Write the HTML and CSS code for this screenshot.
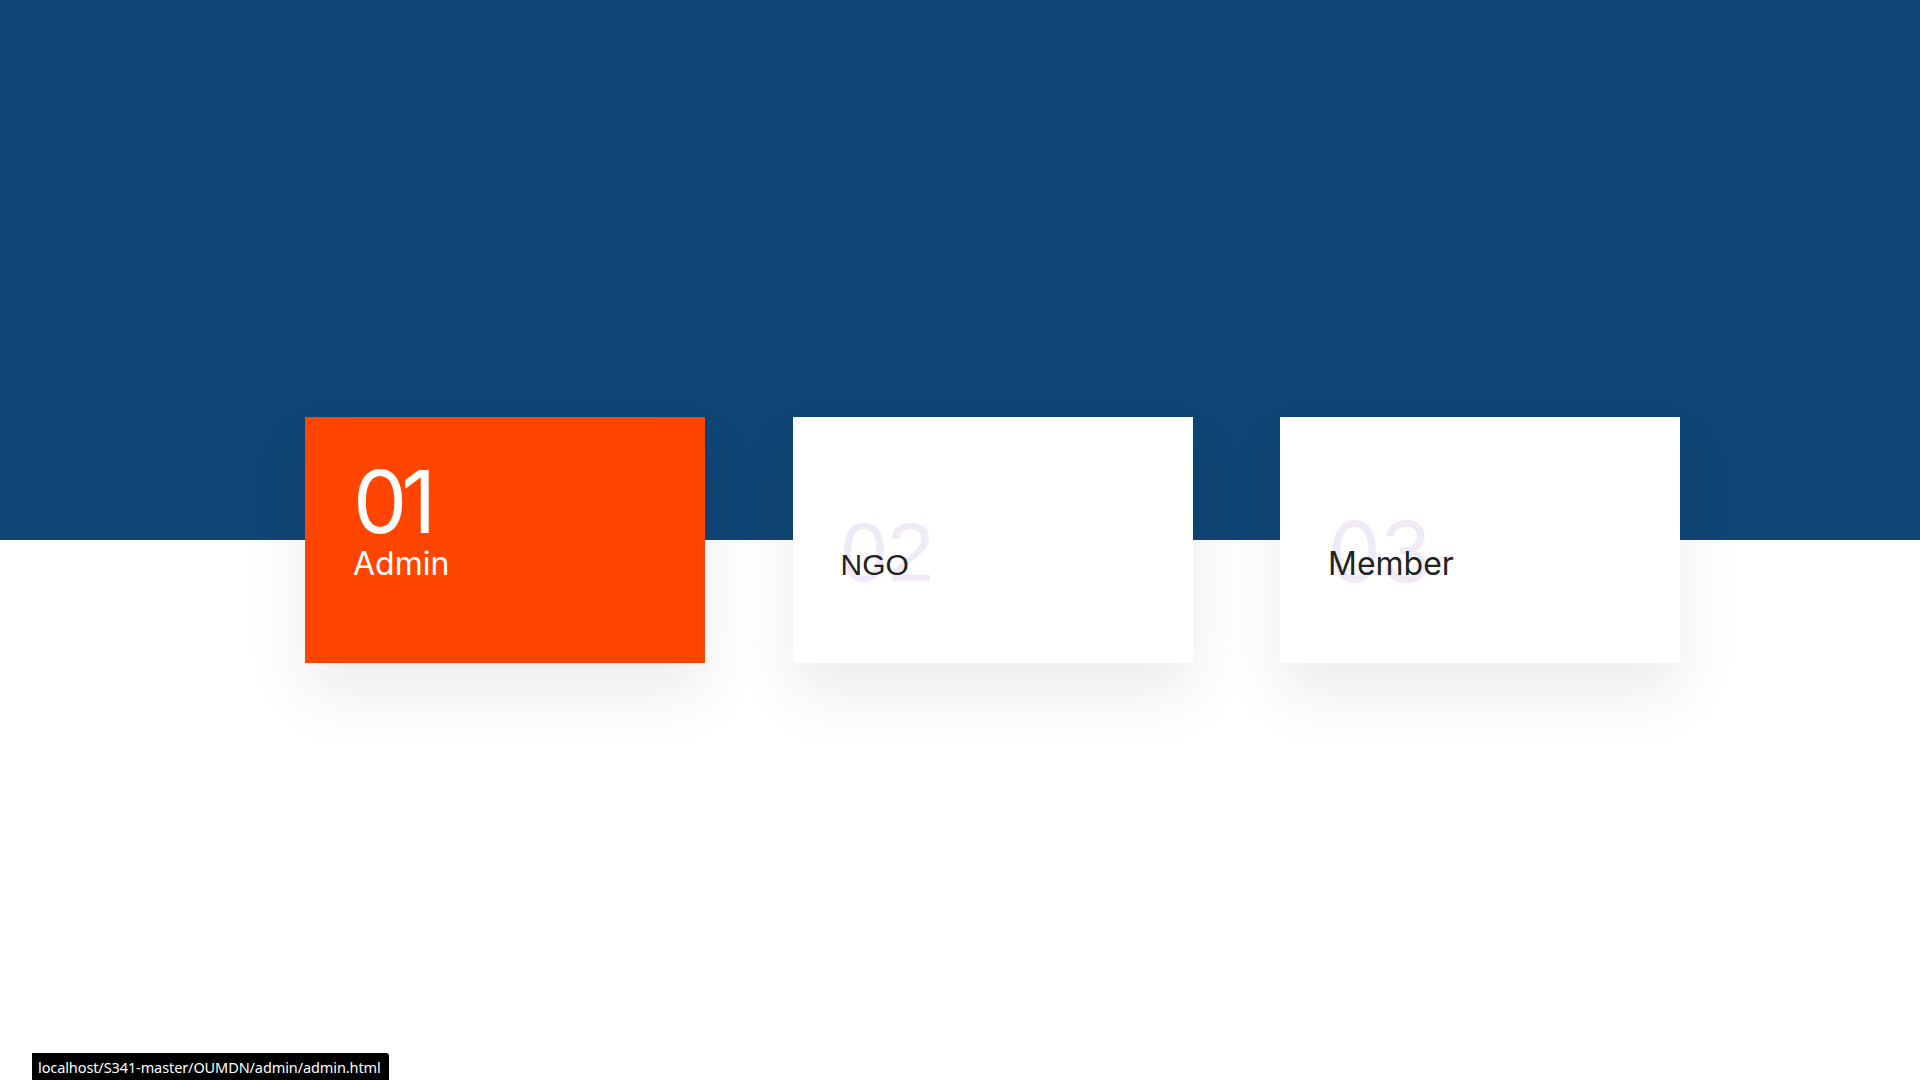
FILE: index.html
```html
<!DOCTYPE html>
<html lang="en">
<head>
<meta charset="utf-8">
<title>Login</title>
<link rel="stylesheet" href="styles.css">
</head>
<body>
<header class="hero"></header>
<section class="cards">
  <a class="card card-active" href="#">
    <span class="num">01</span>
    <span class="title">Admin</span>
  </a>
  <a class="card card-arial" href="#">
    <span class="num">02</span>
    <span class="title">NGO</span>
  </a>
  <a class="card" href="#">
    <span class="num">03</span>
    <span class="title">Member</span>
  </a>
</section>
<div class="status">localhost/S341-master/OUMDN/admin/admin.html</div>
</body>
</html>
```
FILE: styles.css
```css
html, body {
  margin: 0;
  padding: 0;
  background: #ffffff;
}
body {
  font-family: "Inter", "Open Sans", sans-serif;
  height: 1080px;
  overflow: hidden;
}
.hero {
  height: 540px;
  background: #104675;
}
.cards {
  display: flex;
  gap: 87.5px;
  padding-left: 305px;
  margin-top: -123px;
}
.card {
  width: 400px;
  height: 246px;
  box-sizing: border-box;
  padding: 42px 48px 0;
  background: #ffffff;
  box-shadow: 0 30px 60px rgba(0, 0, 0, 0.08);
  display: flex;
  flex-direction: column;
  align-items: flex-start;
  text-decoration: none;
}
.num {
  display: block;
  height: 86px;
  font-size: 84px;
  line-height: 86px;
  font-weight: 400;
  color: #efeaf6;
  letter-spacing: -1px;
  transform: translateY(50px);
}
.title {
  display: block;
  position: relative;
  z-index: 1;
  margin-top: 3px;
  font-size: 32px;
  line-height: 1;
  font-weight: 400;
  color: #222222;
  letter-spacing: 0;
}
.card-active {
  background: #ff4500;
}
.card-active .num {
  color: #ffffff;
  font-size: 86px;
  transform: none;
  letter-spacing: -6px;
}
.card-active .title {
  color: #ffffff;
}
.card-arial .num,
.card-arial .title {
  font-family: "Liberation Sans", Arial, sans-serif;
  letter-spacing: 0;
}
.card-arial .title {
  font-size: 30px;
  margin-top: 5px;
}
.status {
  position: fixed;
  left: 32px;
  bottom: 0;
  height: 27px;
  box-sizing: border-box;
  padding: 4px 8px 0 6px;
  background: #000000;
  color: #ffffff;
  font-family: "Noto Sans", "Open Sans", sans-serif;
  font-size: 14.5px;
  line-height: 20px;
  border-top-right-radius: 3px;
  letter-spacing: -0.1px;
}
```
